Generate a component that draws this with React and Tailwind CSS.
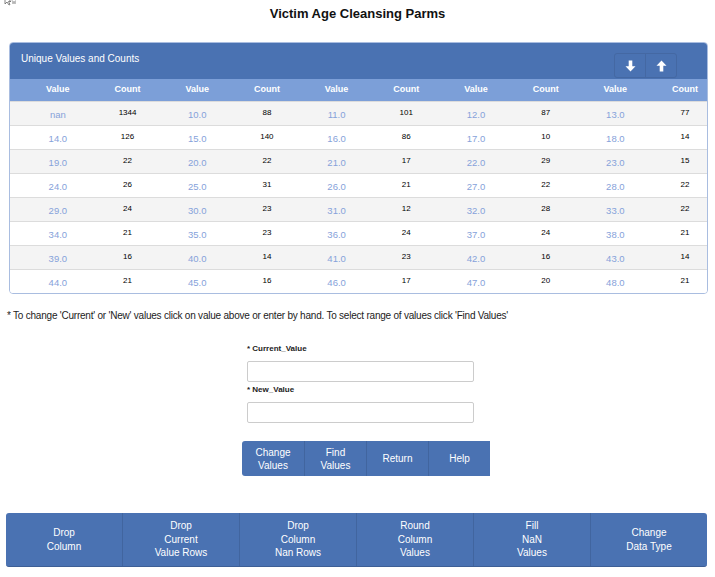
const rows = [
  ['nan', '1344', '10.0', '88', '11.0', '101', '12.0', '87', '13.0', '77'],
  ['14.0', '126', '15.0', '140', '16.0', '86', '17.0', '10', '18.0', '14'],
  ['19.0', '22', '20.0', '22', '21.0', '17', '22.0', '29', '23.0', '15'],
  ['24.0', '26', '25.0', '31', '26.0', '21', '27.0', '22', '28.0', '22'],
  ['29.0', '24', '30.0', '23', '31.0', '12', '32.0', '28', '33.0', '22'],
  ['34.0', '21', '35.0', '23', '36.0', '24', '37.0', '24', '38.0', '21'],
  ['39.0', '16', '40.0', '14', '41.0', '23', '42.0', '16', '43.0', '14'],
  ['44.0', '21', '45.0', '16', '46.0', '17', '47.0', '20', '48.0', '21'],
]

const headers = ['Value', 'Count', 'Value', 'Count', 'Value', 'Count', 'Value', 'Count', 'Value', 'Count']

const actionButtons = [['Change', 'Values'], ['Find', 'Values'], ['Return'], ['Help']]

const bottomButtons = [
  ['Drop', 'Column'],
  ['Drop', 'Current', 'Value Rows'],
  ['Drop', 'Column', 'Nan Rows'],
  ['Round', 'Column', 'Values'],
  ['Fill', 'NaN', 'Values'],
  ['Change', 'Data Type'],
]

function Arrow({ up }) {
  return (
    <svg width="11" height="12" viewBox="0 0 11 12" className={up ? '' : 'rotate-180'}>
      <path d="M5.5 0.5 L10.5 5.8 L7.3 5.8 L7.3 11.5 L3.7 11.5 L3.7 5.8 L0.5 5.8 Z" fill="white" />
    </svg>
  )
}

export default function App() {
  return (
    <div className="relative min-h-[577px] bg-white font-['Liberation_Sans',Arial,sans-serif] text-[#222]">
      <svg className="absolute left-[4px] top-[-4px]" width="12" height="10" viewBox="0 0 12 10">
        <path d="M1 0 L1 8 L3 6 L5 9 L6 8.5 L4.5 5.5 L7 5.5 Z" fill="white" stroke="#666" strokeWidth="0.8" />
        <path d="M8 4 L9 8 L10 5 L11 8 L12 4" fill="none" stroke="#888" strokeWidth="0.6" />
      </svg>

      <h1 className="h-[42px] pt-[5px] text-center text-[13px] font-bold leading-[18px] text-[#111]">
        Victim Age Cleansing Parms
      </h1>

      <section className="ml-[9px] mr-[7px] overflow-hidden rounded-[4px] border border-[#a9bde0]">
        <div className="flex h-[36px] items-start justify-between bg-[#4a72b2] pl-[11px] pr-[30px]">
          <h2 className="pt-[9px] text-[10px] leading-[14px] text-white">Unique Values and Counts</h2>
          <div className="mt-[10px] flex">
            <button className="flex h-[25px] w-[32px] items-center justify-center rounded-l-[3px] border border-[#4468a3] bg-[#4a72b2]">
              <Arrow />
            </button>
            <button className="-ml-px flex h-[25px] w-[32px] items-center justify-center rounded-r-[3px] border border-[#4468a3] bg-[#4a72b2]">
              <Arrow up />
            </button>
          </div>
        </div>

        <div className="grid h-[22px] grid-cols-[repeat(10,69.7px)] items-center bg-[#7c9fd8] pl-[13px] text-[9px] font-bold text-white">
          {headers.map((h, i) => (
            <div key={i} className="text-center">{h}</div>
          ))}
        </div>

        {rows.map((row, r) => (
          <div
            key={r}
            className={`grid h-[24px] grid-cols-[repeat(10,69.7px)] items-center border-t border-[#dcdcdc] pl-[13px] ${r % 2 === 0 ? 'bg-[#f4f4f4]' : 'bg-white'}`}
          >
            {row.map((cell, c) =>
              c % 2 === 0 ? (
                <div key={c} className="pt-[3px] text-center text-[9.5px] text-[#86a2da]">{cell}</div>
              ) : (
                <div key={c} className="pb-[2px] text-center text-[8px] text-black">{cell}</div>
              ),
            )}
          </div>
        ))}
      </section>

      <p className="ml-[7px] mt-[16px] text-[10px] leading-[12px] tracking-[-0.22px] text-[#222]">
        * To change 'Current' or 'New' values click on value above or enter by hand. To select range of values click 'Find Values'
      </p>

      <form className="ml-[247px] mt-[22px] w-[227px]">
        <label className="block text-[8px] font-bold leading-[10px]">* Current_Value</label>
        <input className="mt-[7px] block h-[21px] w-full rounded-[2px] border border-[#cccccc] bg-white outline-none" />
        <label className="mt-[3px] block text-[8px] font-bold leading-[10px]">* New_Value</label>
        <input className="mt-[7px] block h-[21px] w-full rounded-[2px] border border-[#cccccc] bg-white outline-none" />
      </form>

      <div className="ml-[242px] mt-[18px] flex h-[35px] w-[248px] overflow-hidden rounded-l-[3px] bg-[#4a72b2]">
        {actionButtons.map((lines, i) => (
          <button
            key={i}
            className={`flex w-[62px] flex-col items-center justify-center text-[10px] leading-[13px] text-white ${i > 0 ? 'border-l border-[#41659f]' : ''}`}
          >
            {lines.map((l) => (
              <span key={l}>{l}</span>
            ))}
          </button>
        ))}
      </div>

      <div className="ml-[6px] mr-[8px] mt-[37px] flex h-[54px] overflow-hidden rounded-[3px] border-b border-[#3e5f95] bg-[#4a72b2]">
        {bottomButtons.map((lines, i) => (
          <button
            key={i}
            className={`flex flex-1 flex-col items-center justify-center text-[10px] leading-[13.5px] text-white ${i > 0 ? 'border-l border-[#41659f]' : ''}`}
          >
            {lines.map((l) => (
              <span key={l}>{l}</span>
            ))}
          </button>
        ))}
      </div>
    </div>
  )
}
